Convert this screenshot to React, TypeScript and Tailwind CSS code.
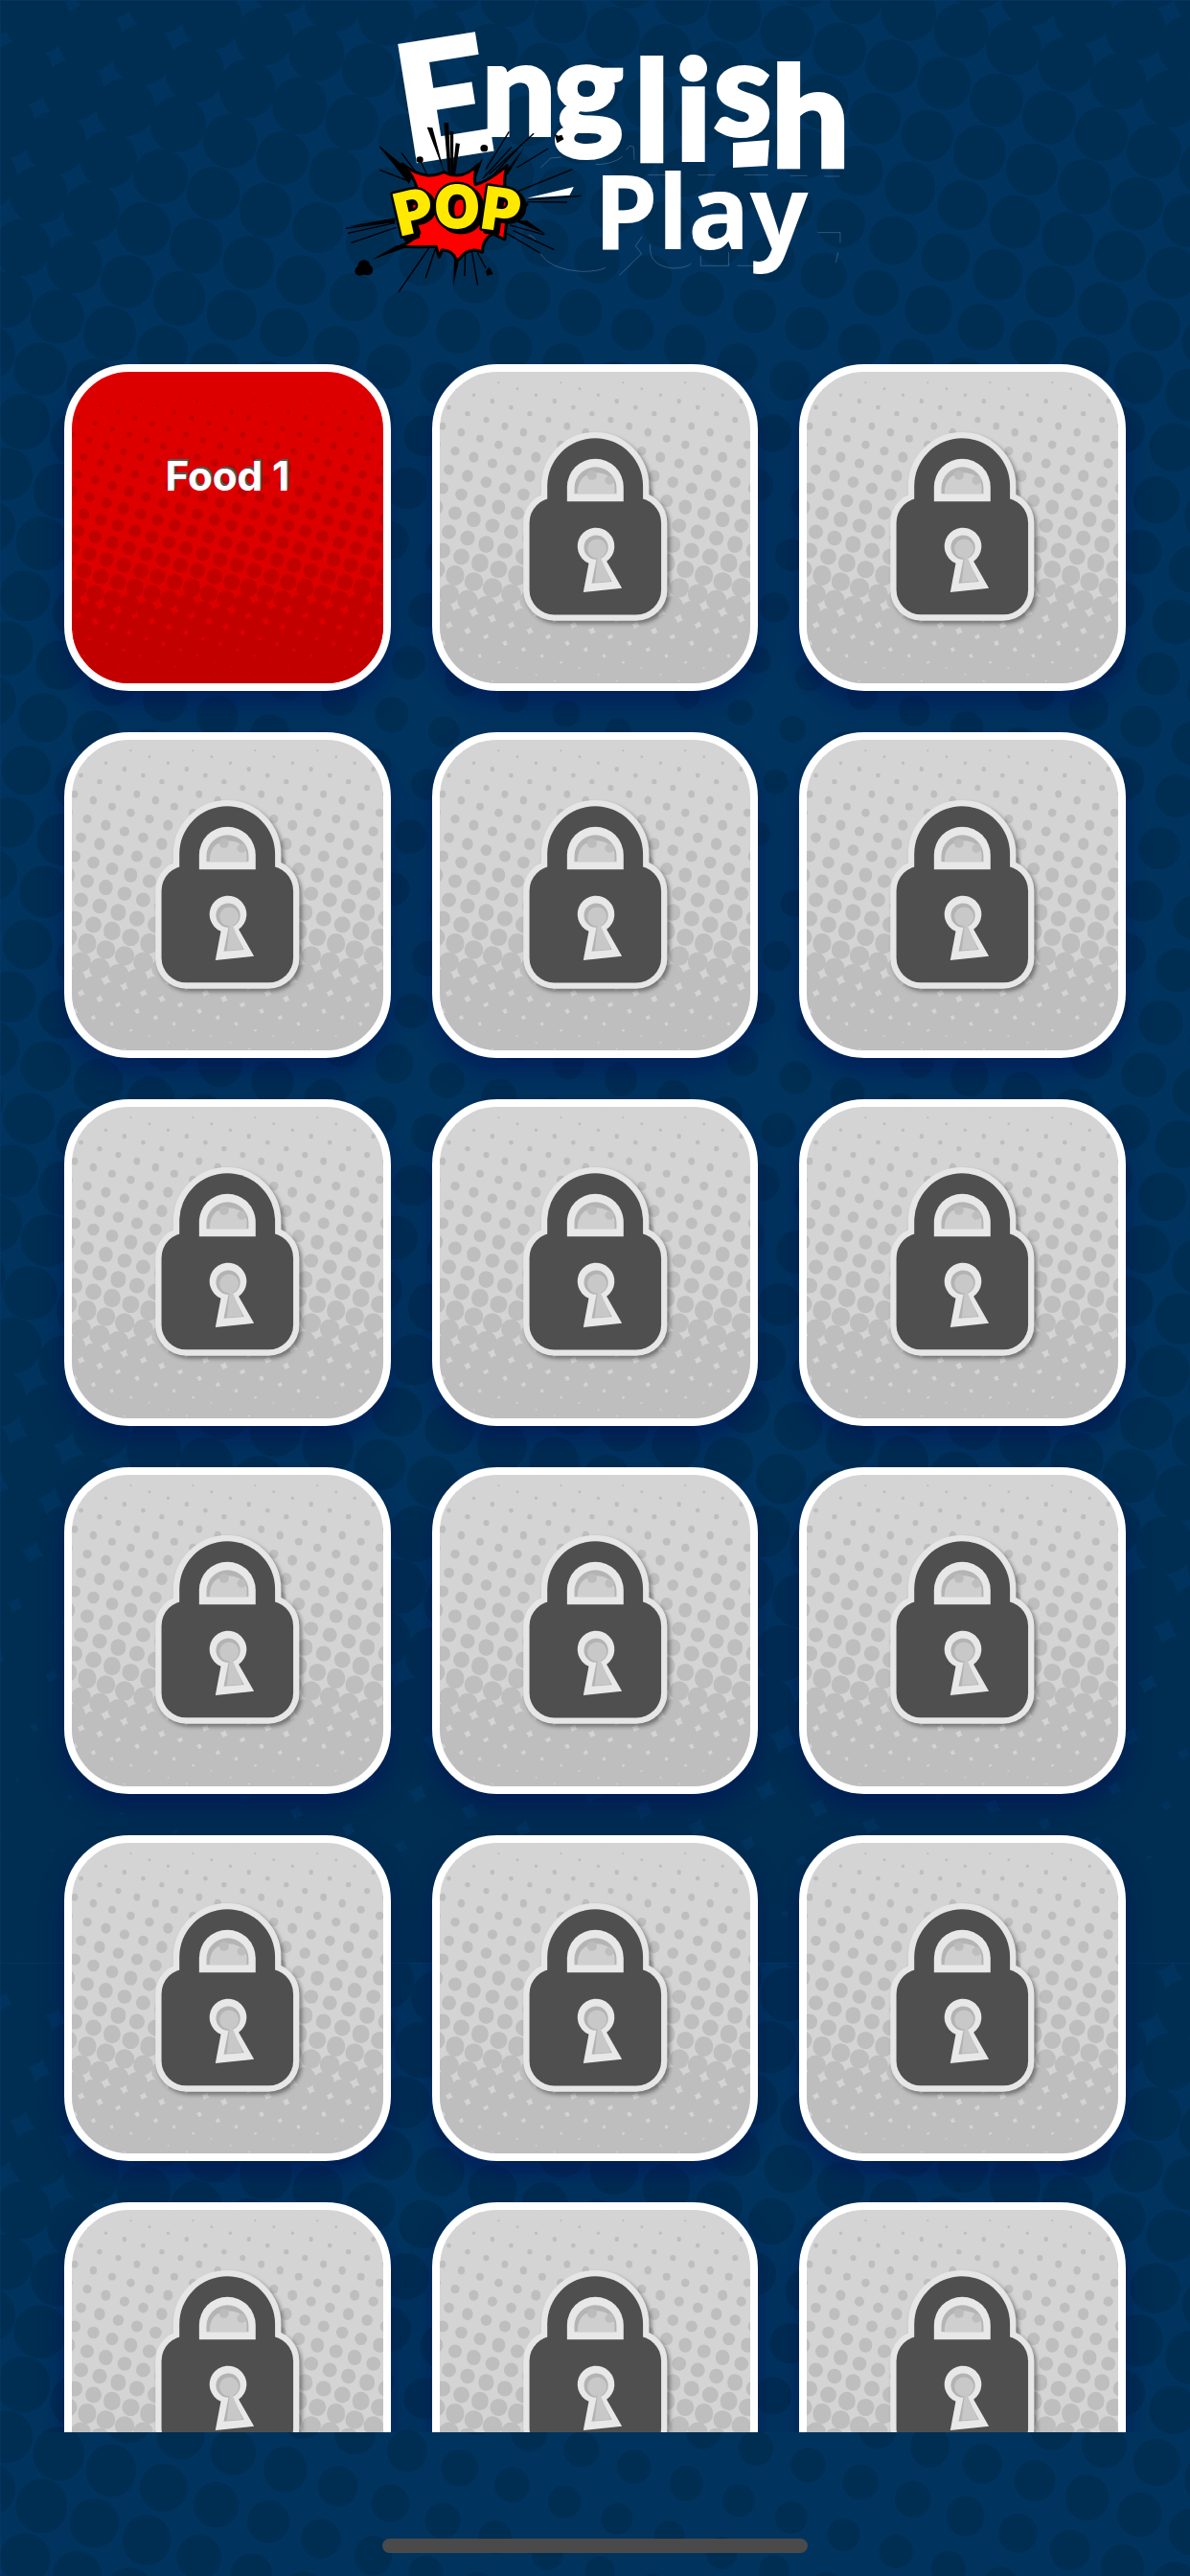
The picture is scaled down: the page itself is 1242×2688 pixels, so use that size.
import { useId } from "react";

type Stop = [number, number];

const levels = [
  { id: 1, title: "Food 1", locked: false },
  ...Array.from({ length: 17 }, (_, i) => ({ id: i + 2, title: `Level ${i + 2}`, locked: true })),
];

// linear interpolation through a list of [position, radius] stops
function radiusAt(stops: Stop[], v: number) {
  if (v <= stops[0][0]) return stops[0][1];
  for (let i = 1; i < stops.length; i++) {
    const [x0, r0] = stops[i - 1];
    const [x1, r1] = stops[i];
    if (v <= x1) return r0 + ((v - x0) / (x1 - x0)) * (r1 - r0);
  }
  return stops[stops.length - 1][1];
}

// halftone dots on a tilted square lattice, as one path
function halftone(
  width: number,
  height: number,
  origin: [number, number],
  step: [number, number],
  radius: (x: number, y: number) => number
) {
  const [dx, dy] = step;
  const n = Math.ceil((width + height) / dx) + 4;
  let d = "";
  for (let a = -n; a <= n; a++) {
    for (let b = -n; b <= n; b++) {
      const x = origin[0] + a * dx - b * dy;
      const y = origin[1] + a * dy + b * dx;
      if (x < -45 || y < -45 || x > width + 45 || y > height + 45) continue;
      const r = radius(x, y);
      if (r <= 0) continue;
      d += `M${(x - r).toFixed(1)} ${y.toFixed(1)}a${r.toFixed(1)} ${r.toFixed(1)} 0 1 0 ${(2 * r).toFixed(1)} 0a${r.toFixed(1)} ${r.toFixed(1)} 0 1 0 ${(-2 * r).toFixed(1)} 0Z`;
    }
  }
  return d;
}

const pageStops: Stop[] = [
  [0, 11], [300, 17], [490, 21.7], [615, 25], [740, 26.8], [870, 28.7], [1050, 34], [1250, 40],
];
const greyStops: Stop[] = [
  [10, 0], [17, 1], [90, 4.6], [156, 7], [193, 8], [235, 10.2], [263, 11.4], [300, 12.6], [332, 14],
];
const redStops: Stop[] = [
  [20, 0], [54, 2], [97, 3.6], [139, 5.2], [167, 6.3], [213, 7.8], [243, 9.2], [263, 10.3], [300, 11.7], [325, 12.9],
];

const pageDots = halftone(1242, 2048, [295, 165], [54.7, 17.75], (x, y) =>
  radiusAt(pageStops, Math.hypot(x - 710, y - 850))
);
const greyDots = halftone(341, 341, [24, 155.7], [19.5, 6.5], (_, y) => radiusAt(greyStops, y));
const redDots = halftone(341, 341, [62, 150.7], [17.8, 5.93], (_, y) => radiusAt(redStops, y));

function Backdrop() {
  const id = useId();
  return (
    <svg
      aria-hidden="true"
      className="absolute inset-0 -z-10 h-full w-full"
      viewBox="0 0 1242 2688"
      preserveAspectRatio="xMidYMin slice"
    >
      <defs>
        <pattern id={id} width="1242" height="2048" patternUnits="userSpaceOnUse">
          <rect width="1242" height="2048" fill="#00345f" />
          <path d={pageDots} fill="#002d52" />
          <path d="M0.5 2048V0.5H1242" fill="none" stroke="#08386a" strokeOpacity="0.6" />
        </pattern>
      </defs>
      <rect width="1242" height="2688" fill={`url(#${id})`} />
    </svg>
  );
}

function Logo() {
  return (
    <svg role="img" aria-label="English Pop Play" className="w-[542px] overflow-visible" viewBox="0 0 542 320">
      <g fill="#fff" stroke="#fff" strokeWidth="4" fontFamily="Lato, sans-serif" fontWeight="900">
        <text x="74 153 228 312 355 395 455" y="170 141 141 168 167 141 174" rotate="-9 0 0 0 0 0 0" fontSize="144">
          <tspan fontSize="168">E</tspan>
          <tspan fontSize="136">ng</tspan>li<tspan fontSize="136">s</tspan>h
        </text>
      </g>
      <path d="M415 149L453 146L451 173L415 175Z" fill="#fff" />

      <g transform="scale(0.357 0.3333)">
        {/* scratched outlines left around the lettering */}
        <g fill="none" stroke="#8fa6bd" strokeOpacity="0.4" strokeWidth="2.5">
          <path d="M600 525L630 495L660 492M850 470Q860 450 872 460L874 500M760 515Q810 515 840 490" />
          <path d="M565 735Q580 740 585 750M600 795Q630 845 720 850Q770 850 790 838M830 862L895 795L878 770L897 740" />
          <path d="M920 765Q915 835 990 840Q1030 838 1040 825M1068 800V832H1150V790M1175 832H1250" />
          <path d="M1410 728H1476V760M1470 790L1463 822M915 548H985M1060 548H1110M1195 548H1265M1330 550H1380M1430 552H1474" />
        </g>
        <path d="M560 620L697 585L685 611Z" fill="#fff" />
        {/* shards and motion lines */}
        <g fill="#000">
          <path d="M126 455L230 545L215 575Z" />
          <path d="M268 398L284 400L320 545Z" />
          <path d="M317 384H331L338 545H330Z" />
          <path d="M335 410L345 412L345 545H338Z" />
          <path d="M352 448L364 450L350 550H342Z" />
          <path d="M432 495L410 560L395 540Z" />
          <path d="M552 462L505 545L480 560Z" />
          <path d="M30 710L175 682V695Z" />
          <path d="M105 814L180 768L215 772Z" />
          <path d="M618 735L520 690L560 690Z" />
          <path d="M345 895L348 790L362 812Z" />
        </g>
        <g stroke="#000" strokeWidth="4" fill="none">
          <path d="M130 460L215 545M193 478L240 545M130 532L210 565M245 495L270 552" />
          <path d="M508 412L440 530M580 418L450 545M515 460L430 560M538 460L440 572M622 465L530 525" />
          <path d="M693 530L520 605M718 613L565 625M678 633L560 632" />
          <path d="M36 730L175 698M46 760L178 712M30 715L170 695" />
          <path d="M500 730L598 792M520 722L640 782M510 705L610 735" />
          <path d="M185 914L278 770M264 870L292 780M378 864L380 780M416 893L398 780M440 840L415 790" />
        </g>
        <g fill="#000">
          <circle cx="84" cy="832" r="18" />
          <circle cx="72" cy="848" r="15" />
          <circle cx="93" cy="845" r="17" />
          <path d="M440 850L448 836L455 844L461 858L444 863Z" />
          <circle cx="247" cy="500" r="10" />
          <circle cx="435" cy="464" r="11" />
          <path d="M641 420L652 425L662 422L668 436L648 448Z" />
        </g>
        <path
          d="M195 513Q232 545 272 550Q304 548 318 538Q372 568 417 515Q402 554 410 578Q450 566 502 518Q490 570 498 600L560 640L500 700L495 750L460 732Q430 750 430 790Q390 770 362 812L352 812Q345 784 312 782L304 805L294 772Q230 775 190 770Q222 758 246 730L210 620L240 600Q232 550 195 513Z"
          fill="#f00"
          stroke="#000"
          strokeWidth="9"
          strokeLinejoin="round"
        />
      </g>

      <text
        x="67 103 150"
        y="247 238 238"
        rotate="-13 0 8"
        className="[paint-order:stroke] drop-shadow-[4px_3px_0_#000]"
        fill="#ffe900"
        stroke="#000"
        strokeWidth="5"
        strokeLinejoin="round"
        fontFamily="Inter, sans-serif"
        fontWeight="900"
        fontSize="62"
      >
        POP
      </text>
      <text x="270" y="260" fill="#fff" fontFamily="'Noto Sans', sans-serif" fontWeight="700" fontSize="107">
        Play
      </text>
    </svg>
  );
}

function Padlock() {
  return (
    <g>
      <g fill="#e6e6e6" stroke="#e6e6e6" strokeWidth="38" className="drop-shadow-[8px_9px_6px_rgba(0,0,0,0.4)]">
        <path d="M423 500V442A150 150 0 0 1 723 442V500Z" />
        <rect x="367" y="479" width="413" height="366" rx="78" />
      </g>
      <g fill="#4f4f4f">
        <path d="M423 560V442A150 150 0 0 1 723 442V560Z" />
        <rect x="367" y="479" width="413" height="366" rx="78" />
      </g>
      <path d="M485 490V445A88 88 0 0 1 662 445V490Z" fill="#e8e8e8" />
      <path d="M508 466V448A66 66 0 0 1 640 448V466Z" fill="#b4b4b4" />
      <path d="M518 466V456Q522 404 576 400Q626 402 634 440V466Z" fill="#cfcfcf" />
      <circle cx="563" cy="408" r="15" fill="#bcbcbc" />
      <circle cx="618" cy="424" r="14" fill="#bebebe" />
      <path d="M553 684A58 58 0 1 1 609 678L657 762L536 775Z" fill="#e8e8e8" />
      <path d="M577 672A38 38 0 1 1 588 670L626 742L562 747Z" fill="#b3b3b3" />
      <path d="M580 668A30 30 0 1 1 590 666L622 740L572 744Z" fill="#c8c8c8" />
    </g>
  );
}

function LevelTile({ title, locked }: { title: string; locked: boolean }) {
  return (
    <button
      type="button"
      aria-label={locked ? `${title}, locked` : undefined}
      className="relative isolate flex aspect-square items-start justify-center rounded-[68px] shadow-[0_14px_24px_rgba(0,16,88,0.55)]"
    >
      <span
        className={`absolute inset-0 -z-10 overflow-hidden rounded-[68px] border-8 border-white ${
          locked ? "bg-[#d4d4d4]" : "bg-[#dc0000]"
        }`}
      >
        <svg aria-hidden="true" className="h-full w-full" viewBox="8 8 325 325">
          <path d={locked ? greyDots : redDots} fill={locked ? "#bebebe" : "#c20000"} />
          {locked && (
            <g transform="scale(0.3333) translate(-62 -60)">
              <Padlock />
            </g>
          )}
        </svg>
      </span>
      {!locked && (
        <span className="pt-[91px] font-[Inter,sans-serif] text-[42px] leading-[52px] font-bold text-white [text-shadow:2px_-2px_0_#555,1px_-1px_0_#555]">
          {title}
        </span>
      )}
    </button>
  );
}

export default function App() {
  return (
    <div className="relative isolate flex h-screen flex-col overflow-hidden bg-[#00345f]">
      <Backdrop />

      <header className="flex h-[380px] shrink-0 items-start justify-center">
        <h1>
          <Logo />
        </h1>
      </header>

      <main className="min-h-0 flex-1 overflow-y-auto [scrollbar-width:none]">
        <div className="grid grid-cols-3 gap-[43px] px-[67px]">
          {levels.map((level) => (
            <LevelTile key={level.id} title={level.title} locked={level.locked} />
          ))}
        </div>
      </main>

      <footer className="flex h-[150px] shrink-0 items-end justify-center pb-6">
        <div className="h-[15px] w-[444px] rounded-full bg-[#4a4a4a]" />
      </footer>
    </div>
  );
}
